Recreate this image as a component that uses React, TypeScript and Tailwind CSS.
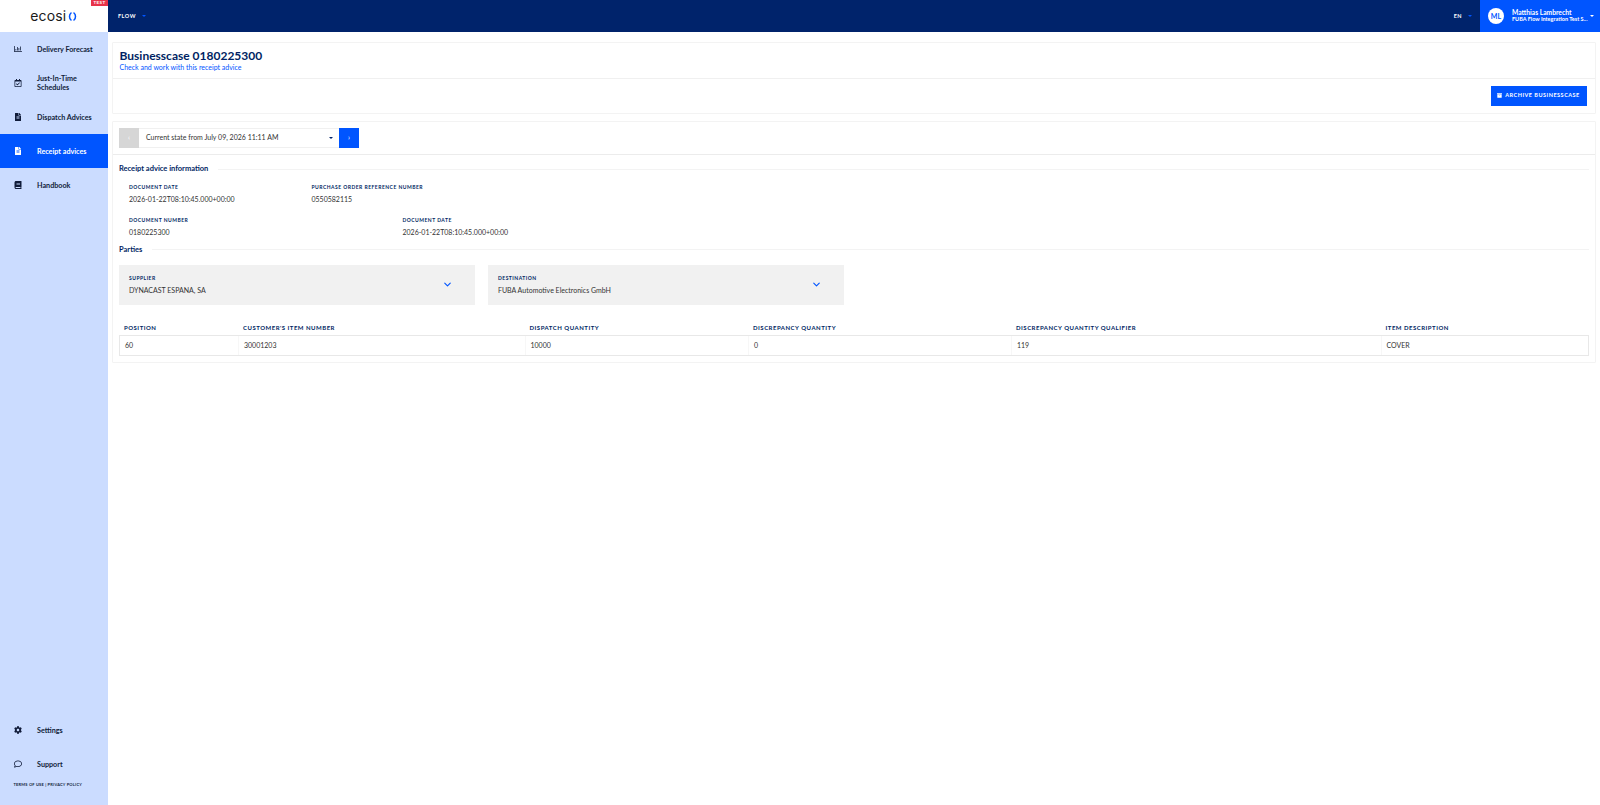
import { ChevronDown } from "lucide-react";
import { FaArchive, FaBook, FaCog, FaFileAlt, FaRegCalendarCheck, FaRegChartBar, FaRegComment } from "react-icons/fa";
import type { IconType } from "react-icons";

const navTop = [
  { label: "Delivery Forecast", icon: FaRegChartBar },
  { label: "Just-In-Time Schedules", icon: FaRegCalendarCheck },
  { label: "Dispatch Advices", icon: FaFileAlt },
  { label: "Receipt advices", icon: FaFileAlt, active: true },
  { label: "Handbook", icon: FaBook },
];

const navBottom = [
  { label: "Settings", icon: FaCog },
  { label: "Support", icon: FaRegComment },
];

const columns = [
  { title: "Position", value: "60", width: "w-[119px]" },
  { title: "Customer's item number", value: "30001203", width: "w-[286.5px]" },
  { title: "Dispatch quantity", value: "10000", width: "w-[223.5px]" },
  { title: "Discrepancy quantity", value: "0", width: "w-[263px]" },
  { title: "Discrepancy quantity qualifier", value: "119", width: "w-[369.5px]" },
  { title: "Item description", value: "COVER", width: "flex-1" },
];

function NavItem({ label, icon: Icon, active }: { label: string; icon: IconType; active?: boolean }) {
  return (
    <div className={`flex h-[34px] items-center text-[7.2px] leading-[9px] font-bold ${active ? "bg-[#0055ff] text-white" : "text-[#111c3a]"}`}>
      <div className="flex w-[35.5px] justify-center">
        <Icon size={8} />
      </div>
      <span className="ml-[1.5px] w-[60px]">{label}</span>
    </div>
  );
}

function Field({ label, value, className }: { label: string; value: string; className?: string }) {
  return (
    <div className={className}>
      <div className="text-[5px] leading-[7px] font-bold tracking-[0.48px] text-[#001f63] uppercase">{label}</div>
      <div className="mt-[2.5px] text-[7px] leading-[10px] text-[#333]">{value}</div>
    </div>
  );
}

function PartyBox({ label, value }: { label: string; value: string }) {
  return (
    <div className="flex h-[40.5px] w-[356px] items-center justify-between bg-[#f1f1f1] pr-[22px] pl-[10px]">
      <Field label={label} value={value} />
      <ChevronDown size={11} strokeWidth={2.5} className="text-[#0055ff]" />
    </div>
  );
}

function SectionTitle({ title }: { title: string }) {
  return (
    <div className="flex items-center gap-[10px]">
      <span className="text-[7.5px] leading-[12px] font-bold text-[#001f63]">{title}</span>
      <div className="h-px flex-1 bg-[#f3f3f3]" />
    </div>
  );
}

function Caret({ className }: { className: string }) {
  return <span className={`h-0 w-0 border-x-[2.5px] border-t-[2.5px] border-x-transparent ${className}`} />;
}

export default function App() {
  return (
    <div className="flex h-[805px] w-[1600px] overflow-hidden bg-white font-['Lato',sans-serif]">
      <aside className="flex w-[107.5px] shrink-0 flex-col bg-[#cbdcff]">
        <div className="relative flex h-[32px] items-center justify-center gap-[2px] bg-white">
          <span className="font-['Inter',sans-serif] text-[14px] leading-none tracking-[0.1px] text-[#1a1a1a]">ecosi</span>
          <svg width="9" height="9" viewBox="0 0 9 9" fill="none" stroke="#0055ff" strokeWidth="1.5" strokeLinecap="round" className="mt-[1px]">
            <path d="M3 1C1 2.8 1 6.2 3 8" />
            <path d="M6 1C8 2.8 8 6.2 6 8" />
          </svg>
          <span className="absolute top-0 right-0 bg-[#e8334a] px-[2px] text-[4.5px] leading-[6px] font-bold tracking-[0.4px] text-white">TEST</span>
        </div>
        {navTop.map((item) => (
          <NavItem key={item.label} {...item} />
        ))}
        <div className="flex-1" />
        {navBottom.map((item) => (
          <NavItem key={item.label} {...item} />
        ))}
        <div className="h-[24px] pl-[13.5px] text-[4px] leading-[8px] font-bold tracking-[0.2px] text-[#111c3a]">TERMS OF USE | PRIVACY POLICY</div>
      </aside>

      <div className="flex min-w-0 flex-1 flex-col">
        <header className="flex h-[32px] shrink-0 items-center bg-[#00236b] text-white">
          <div className="flex items-center gap-[6px] pl-[10.5px] text-[5.5px] font-bold tracking-[0.5px]">
            FLOW
            <Caret className="border-t-[#0055ff]" />
          </div>
          <div className="flex-1" />
          <div className="mr-[8px] flex items-center gap-[6px] text-[5.5px] font-bold tracking-[0.4px]">
            EN
            <Caret className="border-t-[#0055ff]" />
          </div>
          <div className="flex h-full w-[120px] items-center bg-[#0055ff] pl-[8px]">
            <div className="flex h-[16px] w-[16px] items-center justify-center rounded-full bg-white text-[7px] font-bold text-[#0055ff]">ML</div>
            <div className="mt-[-1px] ml-[8px] w-[72px]">
              <div className="text-[6.7px] leading-[8px] font-bold">Matthias Lambrecht</div>
              <div className="text-[5.5px] leading-[7px] font-bold whitespace-nowrap">FUBA Flow Integration Test S...</div>
            </div>
            <Caret className="ml-[6px] border-t-white" />
          </div>
        </header>

        <main className="flex flex-col gap-[7px] px-[4.5px] pt-[10px]">
          <section className="rounded-[1px] border border-[#f3f3f3]">
            <div className="border-b border-[#f0f0f0] px-[6.5px] pt-[4.5px] pb-[7px]">
              <h1 className="text-[12px] leading-[15px] font-bold text-[#001f63]">Businesscase 0180225300</h1>
              <p className="text-[7px] leading-[8px] text-[#0055ff]">Check and work with this receipt advice</p>
            </div>
            <div className="flex h-[34px] items-center justify-end pr-[8px]">
              <button className="flex h-[20px] w-[96px] items-center justify-center gap-[3px] bg-[#0055ff] text-[5.5px] font-bold tracking-[0.5px] whitespace-nowrap text-white">
                <FaArchive size={5} />
                ARCHIVE BUSINESSCASE
              </button>
            </div>
          </section>

          <section className="h-[242px] rounded-[1px] border border-[#f3f3f3]">
            <div className="flex h-[33px] items-center border-b border-[#ececec] px-[6px]">
              <div className="flex h-[20px] w-[20px] items-center justify-center bg-[#d6d6d6] text-[7px] text-white">‹</div>
              <div className="flex h-[20px] w-[200px] items-center justify-between border-y border-[#f0f0f0] pr-[6px] pl-[7px] text-[7px] text-[#333]">
                Current state from July 09, 2026 11:11 AM
                <Caret className="border-t-[#00236b]" />
              </div>
              <div className="flex h-[20px] w-[20px] items-center justify-center bg-[#0055ff] text-[7px] text-white">›</div>
            </div>

            <div className="px-[6px] pt-[8.5px]">
              <SectionTitle title="Receipt advice information" />
              <div className="mt-[9px] flex pl-[10px]">
                <Field label="Document date" value="2026-01-22T08:10:45.000+00:00" className="w-[182.5px]" />
                <Field label="Purchase order reference number" value="0550582115" />
              </div>
              <div className="mt-[13.5px] flex pl-[10px]">
                <Field label="Document number" value="0180225300" className="w-[273.5px]" />
                <Field label="Document date" value="2026-01-22T08:10:45.000+00:00" />
              </div>
              <div className="mt-[7px]">
                <SectionTitle title="Parties" />
              </div>
              <div className="mt-[9px] flex gap-[13px]">
                <PartyBox label="Supplier" value="DYNACAST ESPANA, SA" />
                <PartyBox label="Destination" value="FUBA Automotive Electronics GmbH" />
              </div>
              <div className="mt-[14.5px] flex h-[15px] items-center text-[6px] font-bold tracking-[0.5px] text-[#001f63] uppercase">
                {columns.map((col) => (
                  <div key={col.title} className={`${col.width} pl-[5px]`}>{col.title}</div>
                ))}
              </div>
              <div className="flex h-[21px] border border-[#e8e8e8] text-[7px] text-[#333]">
                {columns.map((col) => (
                  <div key={col.title} className={`${col.width} flex items-center border-r border-[#f7f7f7] pl-[5px] last:border-r-0`}>{col.value}</div>
                ))}
              </div>
            </div>
          </section>
        </main>
      </div>
    </div>
  );
}
